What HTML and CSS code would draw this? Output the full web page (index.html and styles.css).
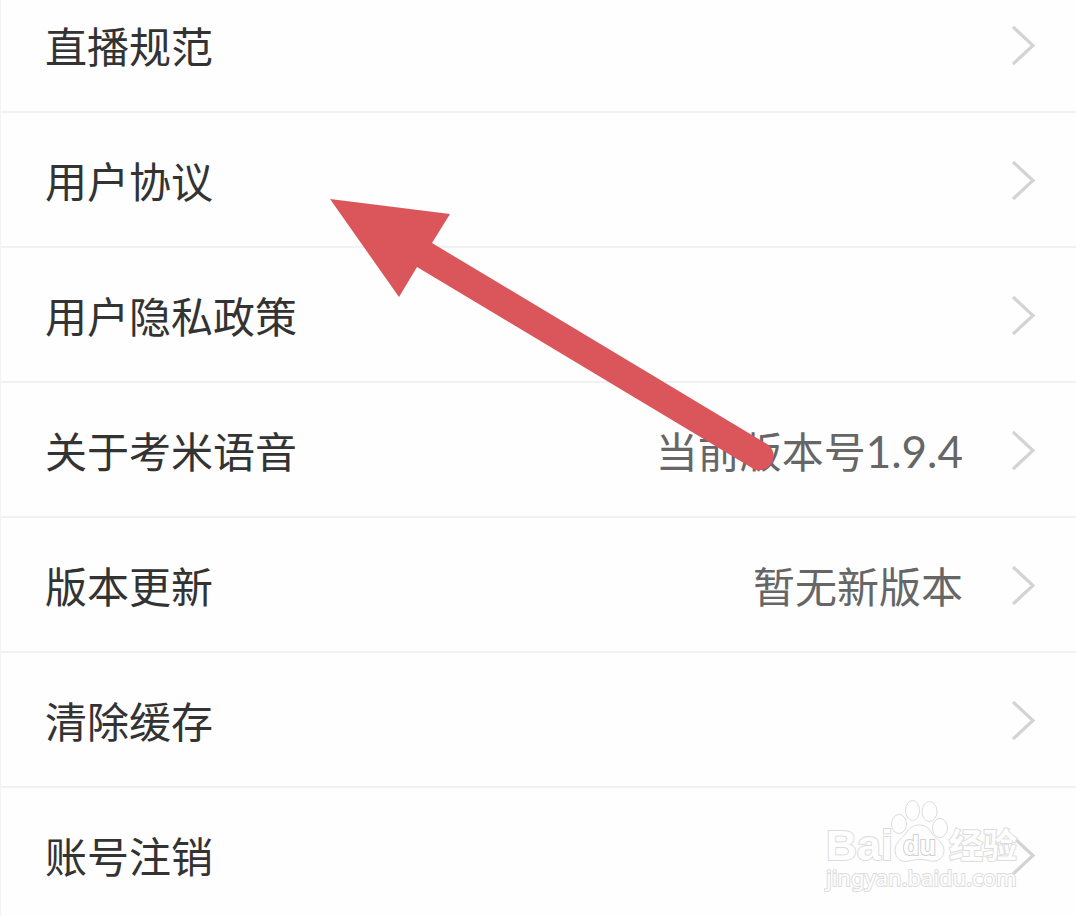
FILE: index.html
```html
<!DOCTYPE html>
<html lang="zh-CN">
<head>
<meta charset="utf-8">
<meta name="viewport" content="width=device-width, initial-scale=1">
<title>设置</title>
<link rel="stylesheet" href="styles.css">
</head>
<body>
<svg class="defs" aria-hidden="true">
  <symbol id="chevron" viewBox="0 0 24 42"><path d="M2 3 L22 21.500 L2 40" fill="none" stroke="currentColor" stroke-width="3.200"/></symbol>
</svg>
<main class="screen">
  <nav class="list">
    <a class="row" href="#live"><span class="label">直播规范</span><svg class="chevron"><use href="#chevron"/></svg></a>
    <a class="row" href="#terms"><span class="label">用户协议</span><svg class="chevron"><use href="#chevron"/></svg></a>
    <a class="row" href="#privacy"><span class="label">用户隐私政策</span><svg class="chevron"><use href="#chevron"/></svg></a>
    <a class="row" href="#about"><span class="label">关于考米语音</span><span class="value">当前版本号<span class="version">1.9.4</span></span><svg class="chevron"><use href="#chevron"/></svg></a>
    <a class="row" href="#update"><span class="label">版本更新</span><span class="value">暂无新版本</span><svg class="chevron"><use href="#chevron"/></svg></a>
    <a class="row" href="#cache"><span class="label">清除缓存</span><svg class="chevron"><use href="#chevron"/></svg></a>
    <a class="row" href="#account"><span class="label">账号注销</span><svg class="chevron"><use href="#chevron"/></svg></a>
  </nav>
  <svg class="pointer" viewBox="0 0 446 274" aria-hidden="true">
    <path d="M0 1 L120 16 L102 45 L437 246 A13.500 13.500 0 0 1 422 270 L87 69 L69 99 Z" fill="#db565b"/>
  </svg>
  <svg class="watermark" viewBox="0 0 200 100" aria-hidden="true">
    <g class="outline">
      <text class="brand" x="2" y="60">Bai</text>
      <ellipse cx="75" cy="24" rx="7.500" ry="9.500"/>
      <ellipse cx="88.500" cy="10.500" rx="7" ry="10"/>
      <ellipse cx="105.500" cy="11.500" rx="7.500" ry="10"/>
      <ellipse cx="116" cy="28" rx="7.500" ry="9.500"/>
      <path d="M95 25 C101 25 105 28 107 32 C110 38 120 42 120 50 C120 58 114 62 107 61 C99 59 92 59 85 61 C77 63 71 58 71 50 C71 42 79 38 83 32 C86 27 90 25 95 25 Z"/>
      <text class="du" x="79" y="55">du</text>
      <text class="product" x="125" y="58">经验</text>
      <text class="site" x="2" y="86">jingyan.baidu.com</text>
    </g>
  </svg>
</main>
</body>
</html>
```
FILE: styles.css
```css
* { box-sizing: border-box; }

body {
  margin: 0;
  background: #fefefe;
  color: #333;
  font-family: "Noto Sans CJK SC", "Liberation Sans", sans-serif;
}

.defs {
  position: absolute;
  width: 0;
  height: 0;
}

.screen {
  position: relative;
  height: 100vh;
  overflow: hidden;
  border-left: 1px solid #f3f3f3;
}

/* The list is scrolled a little past its first row. */
.list {
  margin-top: -22px;
}

.row {
  display: flex;
  align-items: center;
  gap: 48px;
  height: 135px;
  padding: 0 41px 0 44px;
  border-bottom: 2px solid #f1f1f1;
  color: inherit;
  font-size: 42px;
  line-height: 60px;
  text-decoration: none;
}

.label {
  flex: 1;
}

.value {
  color: #666;
}

.version {
  font-family: Lato, sans-serif;
  font-size: 44px;
  line-height: 1;
}

.chevron {
  flex: none;
  width: 24px;
  height: 42px;
  color: #d3d3d3;
}

.pointer {
  position: absolute;
  top: 198px;
  left: 329px;
  width: 446px;
  height: 274px;
}

.watermark {
  position: absolute;
  right: 52px;
  bottom: 16px;
  width: 200px;
  height: 100px;
}

.outline {
  fill: #fefefe;
  stroke: #dcdcdc;
  stroke-width: 1px;
}

.outline text {
  paint-order: stroke;
  stroke-width: 2px;
}

.brand {
  font: bold 43px "Liberation Sans", sans-serif;
}

.outline .du {
  font: bold 27px "Liberation Sans", sans-serif;
  stroke: #d0d0d0;
}

.product {
  font: bold 34px "Noto Sans CJK SC", sans-serif;
}

.site {
  font: 22px "Noto Sans", sans-serif;
}
```
